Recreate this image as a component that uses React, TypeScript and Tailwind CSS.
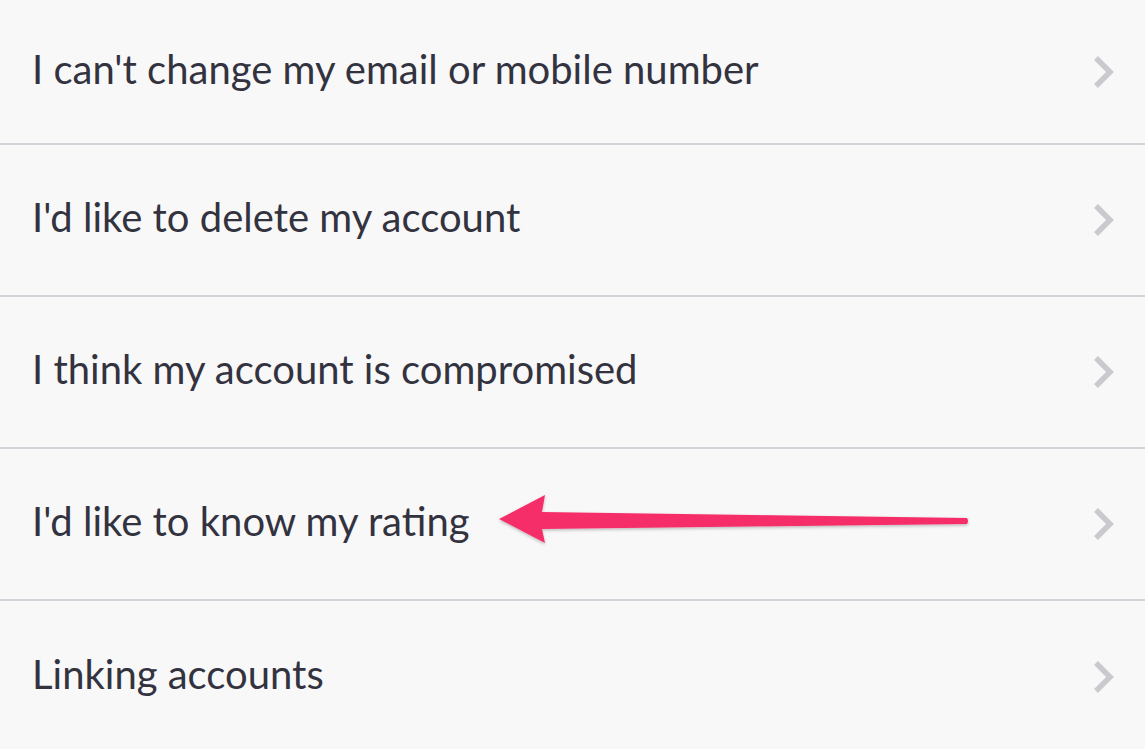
import React from "react";

interface HelpItem {
  id: number;
  title: string;
}

const items: HelpItem[] = [
  { id: 1, title: "I can't change my email or mobile number" },
  { id: 2, title: "I'd like to delete my account" },
  { id: 3, title: "I think my account is compromised" },
  { id: 4, title: "I'd like to know my rating" },
  { id: 5, title: "Linking accounts" },
];

const Chevron: React.FC = () => (
  <svg width="24" height="36" viewBox="0 0 24 36" fill="none">
    <path d="M5 4 L19 18 L5 32" stroke="#c9c9ce" strokeWidth="5.5" strokeLinecap="butt" strokeLinejoin="miter" />
  </svg>
);

const App: React.FC = () => {
  return (
    <div
      className="relative w-[1145px] h-[749px] overflow-hidden bg-[#f8f8f9]"
      style={{ fontFamily: 'Lato, "Open Sans", sans-serif' }}
    >
      <ul className="flex flex-col">
        {items.map((item, i) => (
          <li
            key={item.id}
            className={`flex items-center justify-between pl-[32px] pr-[30px] ${
              i === 0 ? "h-[145px]" : "h-[152px]"
            } ${i < items.length - 1 ? "border-b-2 border-[#d3d3da]" : ""}`}
          >
            <span className="text-[40px] leading-none text-[#33333f] pb-[6px]">{item.title}</span>
            <Chevron />
          </li>
        ))}
      </ul>

      {/* Arrow pointing at the rating row */}
      <svg
        className="absolute left-[490px] top-[488px]"
        width="490"
        height="64"
        viewBox="0 0 490 64"
      >
        <defs>
          <filter id="sh" x="-5%" y="-30%" width="110%" height="160%">
            <feDropShadow dx="0" dy="1.5" stdDeviation="1.5" floodColor="#000" floodOpacity="0.25" />
          </filter>
        </defs>
        <path
          d="M9 31 L55 7 L52 24 L477 30 Q479 33 477 36 L52 41 L55 55 Z"
          fill="#f52f6a"
          filter="url(#sh)"
        />
      </svg>
    </div>
  );
};

export default App;
